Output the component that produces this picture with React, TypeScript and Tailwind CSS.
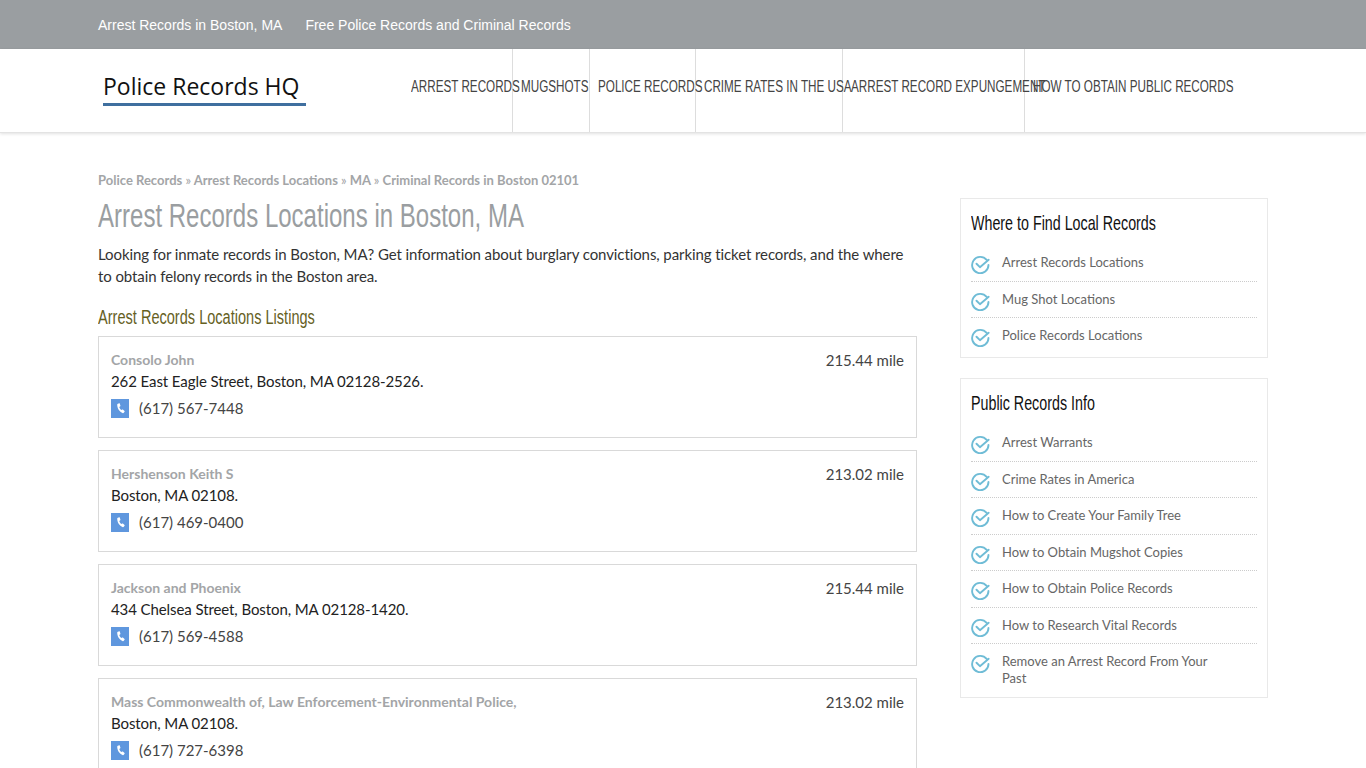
import React from "react";

const narrow = "font-['Liberation_Sans',sans-serif]";

const navItems = [
  { label: "ARREST RECORDS", width: "w-[110px]" },
  { label: "MUGSHOTS", width: "w-[77px]" },
  { label: "POLICE RECORDS", width: "w-[106px]" },
  { label: "CRIME RATES IN THE USA", width: "w-[147px]" },
  { label: "ARREST RECORD EXPUNGEMENT", width: "w-[182px]" },
  { label: "HOW TO OBTAIN PUBLIC RECORDS", width: "w-[194px]" },
];

const listings = [
  { name: "Consolo John", address: "262 East Eagle Street, Boston, MA 02128-2526.", phone: "(617) 567-7448", distance: "215.44 mile" },
  { name: "Hershenson Keith S", address: "Boston, MA 02108.", phone: "(617) 469-0400", distance: "213.02 mile" },
  { name: "Jackson and Phoenix", address: "434 Chelsea Street, Boston, MA 02128-1420.", phone: "(617) 569-4588", distance: "215.44 mile" },
  { name: "Mass Commonwealth of, Law Enforcement-Environmental Police,", address: "Boston, MA 02108.", phone: "(617) 727-6398", distance: "213.02 mile" },
];

const findLinks = ["Arrest Records Locations", "Mug Shot Locations", "Police Records Locations"];
const infoLinks = [
  "Arrest Warrants",
  "Crime Rates in America",
  "How to Create Your Family Tree",
  "How to Obtain Mugshot Copies",
  "How to Obtain Police Records",
  "How to Research Vital Records",
  "Remove an Arrest Record From Your Past",
];

function CheckIcon() {
  return (
    <svg viewBox="0 0 20 20" className="mt-[1px] h-[19px] w-[19px] shrink-0 fill-none stroke-[#6fbcd6] stroke-2">
      <path d="M16.5 5.2A8.6 8.6 0 1 0 18.400 10.500" strokeLinecap="round" />
      <path d="M5.800 9.200 9.400 12.800 18.600 5" strokeLinecap="round" strokeLinejoin="round" />
    </svg>
  );
}

function PhoneIcon() {
  return (
    <span className="flex h-[19px] w-[18px] items-center justify-center bg-[#5f97de]">
      <svg viewBox="0 0 24 24" className="h-[13px] w-[13px] fill-white">
        <path d="M7.2 3.2 9.6 2.4c.5-.1.9.1 1 .5l1.3 4c.1.4 0 .8-.4 1L9.8 9c.5 2.2 2 4.4 3.9 5.8l1.600-.9c.4-.2.8-.2 1.100.1l3 2.800c.3.3.4.8.1 1.100l-1.500 2.100c-.4.5-1 .8-1.600.6C10 18.600 5.500 11.500 6 4.300c0-.5.600-1 1.200-1.100z" />
      </svg>
    </span>
  );
}

function SideBox({ title, links }: { title: string; links: string[] }) {
  return (
    <div className="border border-[#e9e9e9] pb-[1px] pl-[10px] pr-[10px] pt-[9px]">
      <h3 className={`${narrow} origin-left scale-x-[0.68] whitespace-nowrap text-[21px] leading-[30px] text-[#111]`}>{title}</h3>
      <ul className="mt-[7px]">
        {links.map((link, i) => (
          <li
            key={link}
            className={`flex items-start gap-[12px] py-[9px] pr-[30px] text-[13px] leading-[17px] text-[#666] ${i < links.length - 1 ? "h-[36.5px] border-b border-dotted border-[#ccc]" : ""}`}
          >
            <CheckIcon />
            <a>{link}</a>
          </li>
        ))}
      </ul>
    </div>
  );
}

export default function App() {
  return (
    <div className="h-[768px] overflow-hidden bg-white font-['Lato',sans-serif] text-[#333]">
      <div className="h-[49px] bg-[#9a9ea1]">
        <div className="mx-auto flex w-[1170px] gap-[23px] pt-[16px] font-['Liberation_Sans',sans-serif] text-[14px] leading-[18px] text-white">
          <a>Arrest Records in Boston, MA</a>
          <a>Free Police Records and Criminal Records</a>
        </div>
      </div>

      <header className="h-[84px] border-b border-[#e3e3e3] shadow-[0_1px_3px_rgba(0,0,0,0.12)]">
        <div className="mx-auto flex w-[1170px]">
          <div className="w-[305px] pl-[5px] pt-[20px]">
            <div className="w-[203px] whitespace-nowrap border-b-[3px] border-[#3f6f9f] font-['Open_Sans',sans-serif] text-[23px] font-medium leading-[34px] text-[#111]">
              Police Records HQ
            </div>
          </div>
          <nav className="flex h-[83px]">
            {navItems.map((item, i) => (
              <a
                key={item.label}
                className={`${item.width} ${i < navItems.length - 1 ? "border-r border-[#ddd]" : ""} pl-[8px] pt-[28px]`}
              >
                <span className={`${narrow} block origin-left scale-x-[0.73] whitespace-nowrap text-[16px] leading-[20px] text-[#444]`}>
                  {item.label}
                </span>
              </a>
            ))}
          </nav>
        </div>
      </header>

      <div className="mx-auto flex w-[1170px] justify-between">
        <main className="w-[819px] pt-[38px]">
          <div className="text-[13px] font-bold leading-[18px] text-[#a3a5a7]">
            Police Records <span className="font-normal">»</span> Arrest Records Locations <span className="font-normal">»</span> MA <span className="font-normal">»</span> Criminal Records in Boston 02101
          </div>
          <h1 className={`${narrow} mt-[6px] origin-left scale-x-[0.728] whitespace-nowrap text-[33px] leading-[42px] text-[#9a9ea1]`}>Arrest Records Locations in Boston, MA</h1>
          <p className="mt-[6px] text-[15px] leading-[22px] tracking-[-0.09px] text-[#333]">
            Looking for inmate records in Boston, MA? Get information about burglary convictions, parking ticket records, and the where to obtain felony records in the Boston area.
          </p>
          <h2 className={`${narrow} mt-[16px] origin-left scale-x-[0.728] whitespace-nowrap text-[20px] leading-[28px] text-[#66611f]`}>Arrest Records Locations Listings</h2>
          <div className="mt-[5px] flex flex-col gap-[12px]">
            {listings.map((item) => (
              <div key={item.name} className="flex h-[102px] justify-between border border-[#d9d9d9] px-[12px] pt-[12px]">
                <div>
                  <div className="text-[14px] font-bold leading-[21px] text-[#a3a5a7]">{item.name}</div>
                  <div className="text-[15px] leading-[22px] tracking-[-0.09px] text-[#222]">{item.address}</div>
                  <div className="mt-[5px] flex items-center gap-[10px] text-[15px] leading-[22px] text-[#444]">
                    <PhoneIcon />
                    {item.phone}
                  </div>
                </div>
                <div className="text-[15px] leading-[22px] text-[#444]">{item.distance}</div>
              </div>
            ))}
          </div>
        </main>

        <aside className="flex w-[308px] flex-col gap-[20px] pt-[65px]">
          <SideBox title="Where to Find Local Records" links={findLinks} />
          <SideBox title="Public Records Info" links={infoLinks} />
        </aside>
      </div>
    </div>
  );
}
